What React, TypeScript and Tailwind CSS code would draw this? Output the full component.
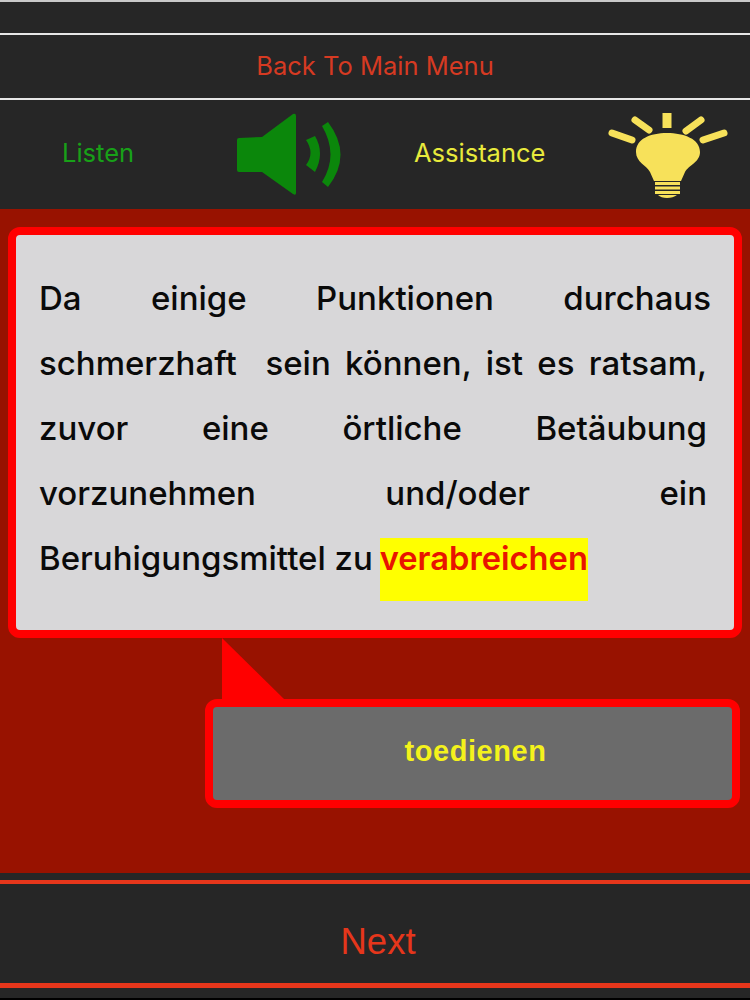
export default function App() {
  const body = { fontFamily: '"Liberation Sans", Arial, sans-serif' };
  const ui = { fontFamily: 'Inter, "Liberation Sans", sans-serif' };
  return (
    <div className="w-[750px] h-[1000px] overflow-hidden flex flex-col bg-[#262626]" style={ui}>
      <div className="h-[2px] bg-[#c9c9c9]" />
      <div className="h-[31px]" />
      <div className="h-[2px] bg-[#e6e6e6]" />
      <div className="h-[63px] flex items-center justify-center text-[25.5px] text-[#d63a22]">Back To Main Menu</div>
      <div className="h-[2px] bg-[#e6e6e6]" />
      <div className="h-[109px] flex items-center">
        <span className="ml-[62px] w-[72px] pb-[3px] text-[25.5px] text-[#18a018] whitespace-nowrap">Listen</span>
        <svg className="ml-[98px] shrink-0" width="113" height="90" viewBox="232 110 113 90">
          <path fill="#0b870b" d="M239 138 L262 137 L293 114 Q296 113 296 116 L296 193 Q296 196 293 194 L262 172 L239 172 Q237 172 237 170 L237 140 Q237 138 239 138 Z" />
          <path fill="#0b870b" d="M306 140 L315 136 Q325 153 315 172 L306 165 Q315 153 306 140 Z" />
          <path fill="#0b870b" d="M322 126 L328 122 Q353 155 328 187 L322 182 Q339 155 322 126 Z" />
        </svg>
        <span className="ml-[69px] w-[131px] pb-[3px] text-[25.5px] text-[#e8ea3c] whitespace-nowrap">Assistance</span>
        <svg className="ml-[60px] shrink-0" width="124" height="90" viewBox="606 110 124 90">
          <g stroke="#f7e15a" strokeLinecap="round" fill="none">
            <path strokeWidth="9" strokeLinecap="butt" d="M668 113 L668 128" />
            <path strokeWidth="7" d="M636 120 L650 130 M702 120 L687 131 M613 133 L633 140 M725 133 L704 140" />
          </g>
          <path fill="#f7e15a" d="M668 133 C685 133 701 139 701 152 C701 162 690 165 686 172 L682 181 L655 181 L651 172 C647 165 637 162 637 152 C637 139 651 133 668 133 Z" />
          <g fill="#f7e15a">
            <rect x="656" y="182" width="25" height="3" />
            <rect x="656" y="186.5" width="25" height="3" />
            <rect x="656" y="191" width="25" height="3" />
            <path d="M659 195 L678 195 Q674 198 668 198 Q662 198 659 195 Z" />
          </g>
        </svg>
      </div>
      <div className="h-[664px] bg-[#981200] flex flex-col">
        <div className="mt-[18px] ml-[8px] w-[734px] h-[411px] border-[8px] border-[#ff0000] rounded-[12px] bg-[#d8d7d9] pl-[23px] pr-[27px] pt-[31px] text-[33px] leading-[65px] font-medium text-[#0a0a0a]">
          <div className="text-justify [text-align-last:justify] -mr-[4px]">Da einige Punktionen durchaus</div>
          <div className="text-justify [text-align-last:justify] whitespace-pre-wrap">schmerzhaft  sein können, ist es ratsam,</div>
          <div className="text-justify [text-align-last:justify]">zuvor eine örtliche Betäubung</div>
          <div className="text-justify [text-align-last:justify]">vorzunehmen und/oder ein</div>
          <div>Beruhigungsmittel zu <span className="inline-block h-[63px] leading-[41px] bg-[#ffff00] text-[#e81500] text-[32.7px] font-semibold -ml-[2px]">verabreichen</span></div>
        </div>
        <div className="relative mt-[61px] ml-[205px] w-[535px] h-[109px] border-[8px] border-[#ff0000] rounded-[12px] bg-[#6b6b6b] flex items-center justify-center pb-[4px] pl-[6px] text-[29px] tracking-[0.02em] font-bold text-[#f4f21c]" style={body}>
          toedienen
          <svg className="absolute left-[9px] top-[-69px]" width="64" height="62" viewBox="0 0 64 62">
            <path fill="#ff0000" d="M0 0 L63 62 L0 62 Z" />
          </svg>
        </div>
      </div>
      <div className="h-[7px]" />
      <div className="h-[4px] bg-[#e6361b]" />
      <div className="h-[99px] flex items-center justify-center pt-[18px] pl-[6px] text-[36.5px] text-[#e6361b]" style={body}>Next</div>
      <div className="h-[5px] bg-[#e6361b]" />
      <div className="h-[10px]" />
      <div className="h-[2px] bg-black" />
    </div>
  );
}
